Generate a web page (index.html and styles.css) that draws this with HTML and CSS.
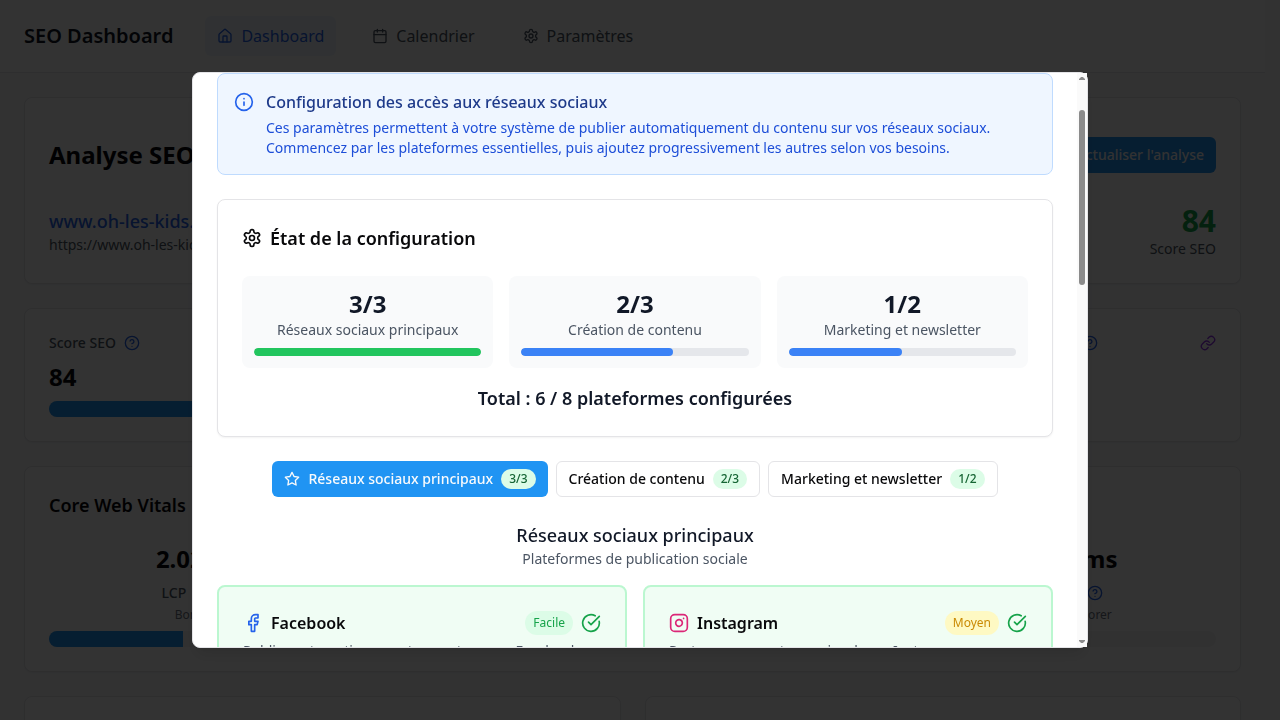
FILE: index.html
```html
<!DOCTYPE html>
<html lang="fr">
<head>
<meta charset="utf-8">
<meta name="viewport" content="width=device-width, initial-scale=1">
<title>SEO Dashboard</title>
<link rel="stylesheet" href="styles.css">
</head>
<body>
<svg class="sprite" aria-hidden="true">
  <symbol id="i-home" viewBox="0 0 24 24"><path d="M15 21v-8a1 1 0 0 0-1-1h-4a1 1 0 0 0-1 1v8"/><path d="M3 10a2 2 0 0 1 .709-1.528l7-5.999a2 2 0 0 1 2.582 0l7 5.999A2 2 0 0 1 21 10v9a2 2 0 0 1-2 2H5a2 2 0 0 1-2-2z"/></symbol>
  <symbol id="i-calendar" viewBox="0 0 24 24"><path d="M8 2v4M16 2v4M3 10h18"/><rect x="3" y="4" width="18" height="18" rx="2"/></symbol>
  <symbol id="i-settings" viewBox="0 0 24 24"><path d="M12.22 2h-.44a2 2 0 0 0-2 2v.18a2 2 0 0 1-1 1.73l-.43.25a2 2 0 0 1-2 0l-.15-.08a2 2 0 0 0-2.73.73l-.22.38a2 2 0 0 0 .73 2.73l.15.1a2 2 0 0 1 1 1.72v.51a2 2 0 0 1-1 1.74l-.15.09a2 2 0 0 0-.73 2.73l.22.38a2 2 0 0 0 2.73.73l.15-.08a2 2 0 0 1 2 0l.43.25a2 2 0 0 1 1 1.73V20a2 2 0 0 0 2 2h.44a2 2 0 0 0 2-2v-.18a2 2 0 0 1 1-1.73l.43-.25a2 2 0 0 1 2 0l.15.08a2 2 0 0 0 2.73-.73l.22-.39a2 2 0 0 0-.73-2.73l-.15-.08a2 2 0 0 1-1-1.74v-.5a2 2 0 0 1 1-1.74l.15-.09a2 2 0 0 0 .73-2.73l-.22-.38a2 2 0 0 0-2.73-.73l-.15.08a2 2 0 0 1-2 0l-.43-.25a2 2 0 0 1-1-1.73V4a2 2 0 0 0-2-2z"/><circle cx="12" cy="12" r="3"/></symbol>
  <symbol id="i-help" viewBox="0 0 24 24"><circle cx="12" cy="12" r="10"/><path d="M9.09 9a3 3 0 0 1 5.83 1c0 2-3 3-3 3M12 17h.01"/></symbol>
  <symbol id="i-info" viewBox="0 0 24 24"><circle cx="12" cy="12" r="10"/><path d="M12 16v-4M12 8h.01"/></symbol>
  <symbol id="i-link" viewBox="0 0 24 24"><path d="M10 13a5 5 0 0 0 7.54.54l3-3a5 5 0 0 0-7.07-7.07l-1.72 1.71"/><path d="M14 11a5 5 0 0 0-7.54-.54l-3 3a5 5 0 0 0 7.07 7.07l1.71-1.71"/></symbol>
  <symbol id="i-star" viewBox="0 0 24 24"><path d="M12 2l3.09 6.26L22 9.27l-5 4.87 1.18 6.88L12 17.77l-6.18 3.25L7 14.14 2 9.27l6.91-1.01z"/></symbol>
  <symbol id="i-facebook" viewBox="0 0 24 24"><path d="M18 2h-3a5 5 0 0 0-5 5v3H7v4h3v8h4v-8h3l1-4h-4V7a1 1 0 0 1 1-1h3z"/></symbol>
  <symbol id="i-instagram" viewBox="0 0 24 24"><rect x="2" y="2" width="20" height="20" rx="5"/><path d="M16 11.37A4 4 0 1 1 12.63 8 4 4 0 0 1 16 11.37zM17.5 6.5h.01"/></symbol>
  <symbol id="i-check" viewBox="0 0 24 24"><path d="M21.801 10A10 10 0 1 1 17 3.335"/><path d="m9 11 3 3L22 4"/></symbol>
</svg>

<div class="page">
  <header class="topbar">
    <div class="brand">SEO Dashboard</div>
    <nav class="nav">
      <a class="nav-link nav-active" href="#"><svg class="icon"><use href="#i-home"/></svg>Dashboard</a>
      <a class="nav-link" href="#"><svg class="icon"><use href="#i-calendar"/></svg>Calendrier</a>
      <a class="nav-link" href="#"><svg class="icon"><use href="#i-settings"/></svg>Paramètres</a>
    </nav>
  </header>
  <main class="main">
    <section class="card summary">
      <div class="row">
        <h1 class="page-title">Analyse SEO</h1>
        <button class="btn btn-primary" type="button">Actualiser l'analyse</button>
      </div>
      <div class="row">
        <div>
          <a class="site" href="#">www.oh-les-kids.fr</a>
          <div class="muted">https://www.oh-les-kids.fr</div>
        </div>
        <div class="score">
          <div class="score-value">84</div>
          <div class="muted">Score SEO</div>
        </div>
      </div>
    </section>

    <div class="quad">
      <section class="card">
        <div class="metric-label">Score SEO <svg class="icon blue"><use href="#i-help"/></svg></div>
        <div class="metric-value">84</div>
        <div class="bar"><div class="fill" style="width:84%"></div></div>
      </section>
      <section class="card"></section>
      <section class="card"></section>
      <section class="card">
        <div class="row">
          <div class="metric-label">Liens internes <svg class="icon blue"><use href="#i-help"/></svg></div>
          <svg class="icon purple"><use href="#i-link"/></svg>
        </div>
      </section>
    </div>

    <section class="card">
      <h2 class="card-title">Core Web Vitals <svg class="icon blue"><use href="#i-help"/></svg></h2>
      <div class="quad vitals">
        <div class="vital">
          <div class="vital-value">2.02s</div>
          <div class="metric-label">LCP <svg class="icon blue"><use href="#i-help"/></svg></div>
          <div class="vital-note">Bon</div>
          <div class="bar"><div class="fill" style="width:49%"></div></div>
        </div>
        <div class="vital"></div>
        <div class="vital"></div>
        <div class="vital">
          <div class="vital-value">200ms</div>
          <div class="metric-label">INP <svg class="icon blue"><use href="#i-help"/></svg></div>
          <div class="vital-note">À améliorer</div>
          <div class="bar"></div>
        </div>
      </div>
    </section>

    <div class="duo">
      <section class="card tall"></section>
      <section class="card tall"></section>
    </div>
  </main>
</div>

<div class="overlay">
  <div class="dialog" role="dialog" aria-modal="true" aria-labelledby="dlg-title">
    <div class="dialog-body">
      <div class="notice">
        <svg class="icon-lg"><use href="#i-info"/></svg>
        <div>
          <h2 class="notice-title" id="dlg-title">Configuration des accès aux réseaux sociaux</h2>
          <p class="notice-text">Ces paramètres permettent à votre système de publier automatiquement du contenu sur vos réseaux sociaux. Commencez par les plateformes essentielles, puis ajoutez progressivement les autres selon vos besoins.</p>
        </div>
      </div>

      <section class="card status">
        <h3 class="status-title"><svg class="icon-lg"><use href="#i-settings"/></svg>État de la configuration</h3>
        <div class="stats">
          <div class="stat"><div class="stat-value">3/3</div><div class="stat-label">Réseaux sociaux principaux</div><div class="meter"><div class="meter-fill done" style="width:100%"></div></div></div>
          <div class="stat"><div class="stat-value">2/3</div><div class="stat-label">Création de contenu</div><div class="meter"><div class="meter-fill" style="width:66.67%"></div></div></div>
          <div class="stat"><div class="stat-value">1/2</div><div class="stat-label">Marketing et newsletter</div><div class="meter"><div class="meter-fill" style="width:50%"></div></div></div>
        </div>
        <div class="total">Total : 6 / 8 plateformes configurées</div>
      </section>

      <div class="tabs">
        <button class="btn btn-primary" type="button"><svg class="icon"><use href="#i-star"/></svg>Réseaux sociaux principaux<span class="count">3/3</span></button>
        <button class="btn btn-outline" type="button">Création de contenu<span class="count">2/3</span></button>
        <button class="btn btn-outline" type="button">Marketing et newsletter<span class="count">1/2</span></button>
      </div>

      <section class="platforms">
        <div class="section-head">
          <h3 class="section-title">Réseaux sociaux principaux</h3>
          <p class="stat-label">Plateformes de publication sociale</p>
        </div>
        <div class="platform-grid">
          <article class="platform">
            <div class="platform-head">
              <svg class="icon-lg fb"><use href="#i-facebook"/></svg>
              <h4 class="platform-name">Facebook</h4>
              <span class="level easy">Facile</span>
              <svg class="icon-lg ok"><use href="#i-check"/></svg>
            </div>
            <p class="platform-text">Publier automatiquement sur votre page Facebook</p>
          </article>
          <article class="platform">
            <div class="platform-head">
              <svg class="icon-lg ig"><use href="#i-instagram"/></svg>
              <h4 class="platform-name">Instagram</h4>
              <span class="level medium">Moyen</span>
              <svg class="icon-lg ok"><use href="#i-check"/></svg>
            </div>
            <p class="platform-text">Partager vos contenus visuels sur Instagram</p>
          </article>
        </div>
      </section>
    </div>
    <div class="scrollbar" aria-hidden="true">
      <span class="arrow up"></span>
      <div class="track"><div class="thumb"></div></div>
      <span class="arrow down"></span>
    </div>
  </div>
</div>
</body>
</html>
```
FILE: styles.css
```css
*, *::before, *::after { box-sizing: border-box; }
html { height: 100%; }
body {
  margin: 0;
  height: 100%;
  overflow: hidden;
  background: #f9fafb;
  color: #09090b;
  font-family: "Noto Sans", sans-serif;
  font-size: 14px;
  line-height: 20px;
}
h1, h2, h3, h4, p { margin: 0; }
a { color: inherit; text-decoration: none; }
button { font: inherit; cursor: pointer; }
.sprite { display: none; }
svg { fill: none; stroke: currentColor; stroke-width: 2; stroke-linecap: round; stroke-linejoin: round; }
.icon { width: 16px; height: 16px; flex: none; }
.icon-lg { width: 20px; height: 20px; flex: none; }
.blue { color: #2563eb; }
.purple { color: #9333ea; }

/* Dashboard */
.page { height: 100%; overflow: hidden; padding-right: 15px; }
.topbar {
  display: flex;
  align-items: center;
  gap: 32px;
  padding: 16px 24px;
  background: #fff;
  border-bottom: 1px solid #e5e7eb;
}
.brand { font-size: 20px; line-height: 28px; font-weight: 600; color: #111827; }
.nav { display: flex; gap: 24px; }
.nav-link {
  display: flex;
  align-items: center;
  gap: 8px;
  padding: 8px 12px;
  border-radius: 6px;
  font-size: 16px;
  line-height: 24px;
  color: #4b5563;
}
.nav-active { background: #eff6ff; color: #2563eb; }
.main { display: flex; flex-direction: column; gap: 24px; padding: 24px; }
.card {
  padding: 24px;
  background: #fff;
  border: 1px solid #e4e4e7;
  border-radius: 8px;
  box-shadow: 0 1px 2px rgba(0, 0, 0, .05);
}
.row { display: flex; justify-content: space-between; align-items: center; }
.summary { display: flex; flex-direction: column; gap: 30px; padding-top: 39px; }
.page-title { font-size: 24px; line-height: 32px; font-weight: 700; }
.site { display: block; font-size: 18px; line-height: 28px; font-weight: 500; color: #2563eb; }
.muted { color: #4b5563; }
.score { text-align: right; }
.score-value { font-size: 30px; line-height: 36px; font-weight: 700; color: #16a34a; }
.quad { display: grid; grid-template-columns: repeat(4, 1fr); gap: 24px; }
.metric-label { display: flex; align-items: center; gap: 8px; font-weight: 500; color: #4b5563; }
.metric-value { margin: 8px 0; font-size: 24px; line-height: 32px; font-weight: 700; }
.bar { height: 16px; border-radius: 8px; background: #f4f4f5; overflow: hidden; }
.fill { height: 100%; background: #2094f3; }
.card-title { display: flex; align-items: center; gap: 8px; font-size: 18px; line-height: 28px; font-weight: 600; }
.vitals { margin-top: 24px; }
.vital-value { font-size: 24px; line-height: 32px; font-weight: 700; text-align: center; }
.vital .metric-label { justify-content: center; margin: 8px 0 4px; }
.vital-note { margin-bottom: 8px; font-size: 12px; line-height: 16px; text-align: center; color: #6b7280; }
.tall { height: 240px; }
.duo { display: grid; grid-template-columns: repeat(2, 1fr); gap: 24px; }

/* Buttons */
.btn {
  display: inline-flex;
  align-items: center;
  gap: 8px;
  height: 36px;
  padding: 0 12px;
  border: 0;
  border-radius: 6px;
  font-weight: 500;
  white-space: nowrap;
}
.btn-primary { background: #2094f3; color: #f8fafc; }
.btn-outline { background: #fff; border: 1px solid #e4e4e7; color: #09090b; }
.count {
  padding: 2px 8px;
  border-radius: 10px;
  background: #dcfce7;
  color: #166534;
  font-size: 12px;
  line-height: 16px;
}

/* Dialog */
.overlay {
  position: fixed;
  inset: 0;
  display: flex;
  align-items: center;
  justify-content: center;
  background: rgba(0, 0, 0, .8);
}
.dialog {
  display: flex;
  width: 100%;
  max-width: 896px;
  height: 80vh;
  border: 1px solid #e4e4e7;
  border-radius: 8px;
  background: #fff;
  box-shadow: 0 10px 15px -3px rgba(0, 0, 0, .1), 0 4px 6px -4px rgba(0, 0, 0, .1);
}
.dialog-body {
  flex: 1;
  min-width: 0;
  display: flex;
  flex-direction: column;
  gap: 24px;
  padding: 0 24px;
  overflow: hidden;
  border-radius: 7px 0 0 7px;
}
.dialog-body > * { flex: none; }
.notice {
  display: flex;
  gap: 12px;
  padding: 16px;
  border: 1px solid #bfdbfe;
  border-radius: 8px;
  background: #eff6ff;
}
.notice .icon-lg { margin-top: 2px; color: #2563eb; }
.notice-title { margin-bottom: 4px; font-size: 16px; line-height: 24px; font-weight: 500; color: #1e3a8a; }
.notice-text { color: #1d4ed8; }
.status-title { display: flex; align-items: center; gap: 8px; font-size: 18px; line-height: 28px; font-weight: 600; }
.stats { display: grid; grid-template-columns: repeat(3, 1fr); gap: 16px; margin: 24px 0 16px; text-align: center; }
.stat { padding: 12px; border-radius: 8px; background: #f9fafb; }
.stat-value { font-size: 24px; line-height: 32px; font-weight: 700; color: #111827; }
.stat-label { color: #4b5563; }
.meter { height: 8px; margin-top: 8px; border-radius: 4px; background: #e5e7eb; overflow: hidden; }
.meter-fill { height: 100%; border-radius: 4px; background: #3b82f6; }
.done { background: #22c55e; }
.total { font-size: 18px; line-height: 28px; font-weight: 600; text-align: center; color: #111827; }
.tabs { display: flex; flex-wrap: wrap; justify-content: center; gap: 8px; }
.section-head { margin-bottom: 16px; text-align: center; }
.section-title { font-size: 18px; line-height: 28px; font-weight: 500; color: #111827; }
.platform-grid { display: grid; grid-template-columns: repeat(2, 1fr); gap: 16px; }
.platform { padding: 24px; border: 2px solid #bbf7d0; border-radius: 8px; background: #f0fdf4; }
.platform-head { display: flex; align-items: center; gap: 8px; }
.platform-name { flex: 1; font-size: 16px; line-height: 24px; font-weight: 600; }
.platform-text { margin-top: 6px; color: #4b5563; }
.level { padding: 4px 8px; border-radius: 12px; font-size: 12px; line-height: 16px; }
.easy { background: #dcfce7; color: #16a34a; }
.medium { background: #fef9c3; color: #ca8a04; }
.fb { color: #2563eb; }
.ig { color: #db2777; }
.ok { color: #16a34a; }

/* Scroll bar */
.scrollbar {
  display: flex;
  flex-direction: column;
  align-items: center;
  width: 10px;
  padding: 4px 0;
  background: #fafafa;
}
.arrow { width: 6px; height: 3px; background: #8b8b8b; }
.up { clip-path: polygon(35% 0, 65% 0, 100% 70%, 100% 100%, 0 100%, 0 70%); }
.down { clip-path: polygon(0 0, 100% 0, 100% 30%, 65% 100%, 35% 100%, 0 30%); }
.track { flex: 1; padding-top: 30px; }
.thumb { width: 6px; height: 33%; border-radius: 3px; background: #8b8b8b; }
```
